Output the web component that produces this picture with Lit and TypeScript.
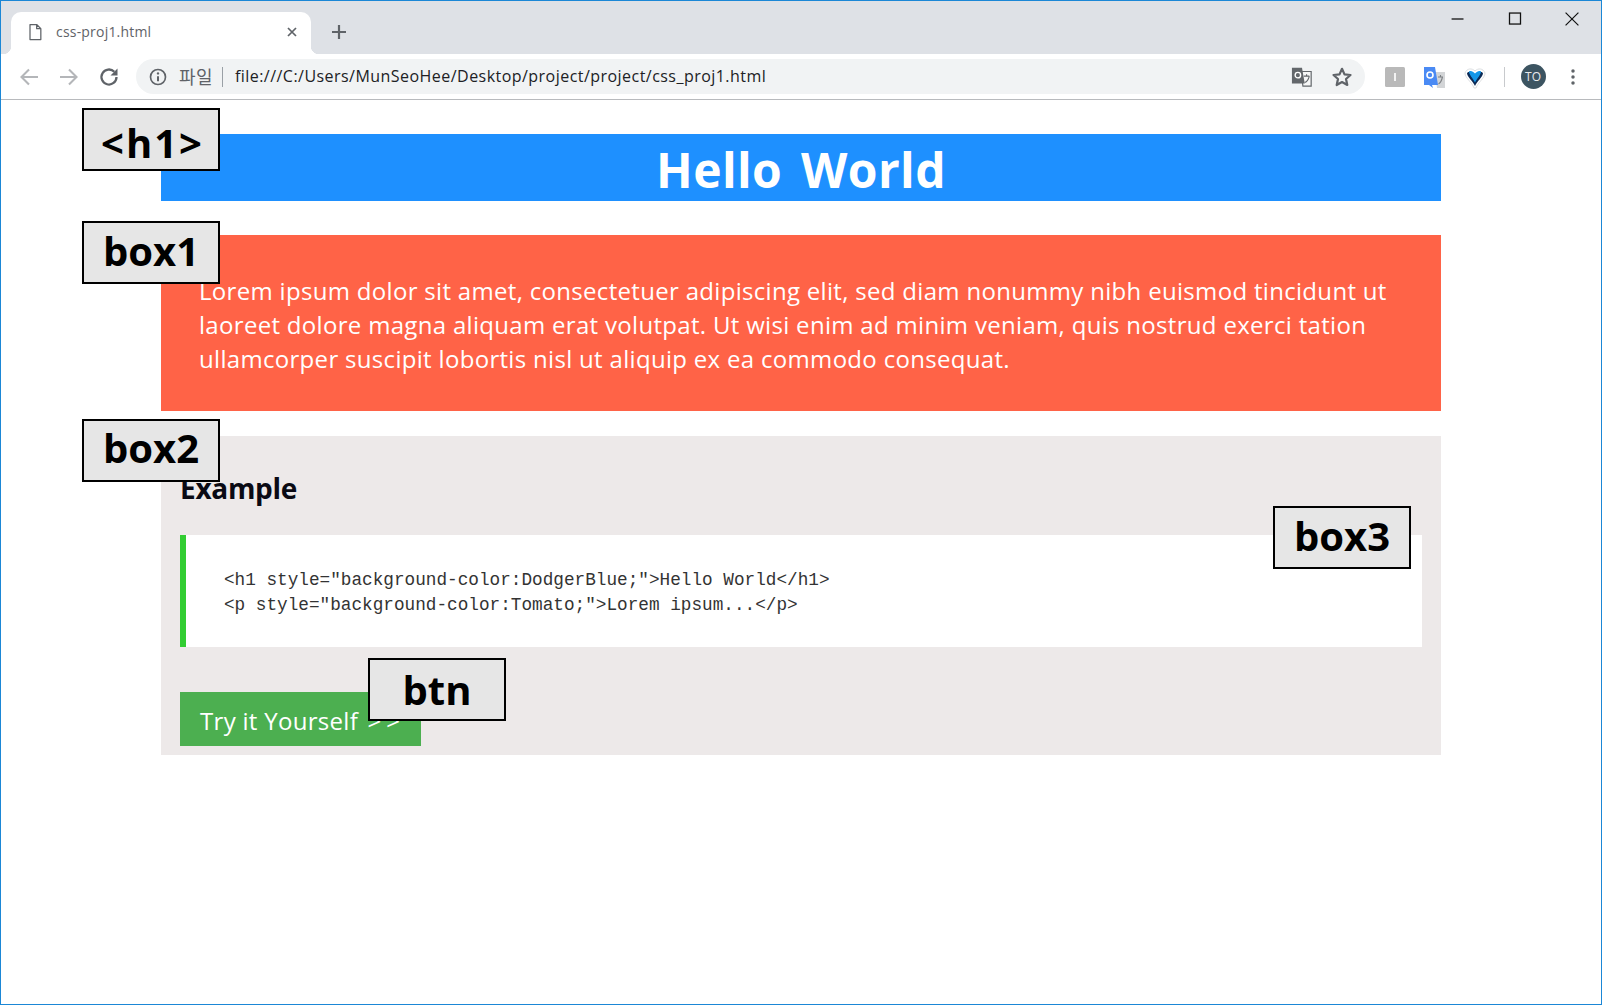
import { LitElement, html, css, svg } from "lit"
import { customElement } from "lit/decorators.js"

const icon = (size: number, body: unknown) =>
  html`<svg width=${size} height=${size} viewBox="0 0 24 24" fill="none">${body}</svg>`

@customElement("app-root")
export class AppRoot extends LitElement {
  static styles = css`
    :host {
      display: block;
      font-family: "Open Sans", "Noto Sans CJK KR", sans-serif;
      color: #000;
    }
    .window {
      box-sizing: border-box;
      height: 1005px;
      border: 1px solid #1b87d6;
      display: flex;
      flex-direction: column;
      background: #fff;
      overflow: hidden;
    }
    .tabstrip {
      height: 53px;
      flex: none;
      background: #dee1e6;
      display: flex;
      align-items: flex-end;
      padding-left: 10px;
    }
    .tab {
      box-sizing: border-box;
      width: 300px;
      height: 42px;
      background: #fff;
      border-radius: 10px 10px 0 0;
      display: flex;
      align-items: center;
      padding: 0 11px 3px 14px;
      font-size: 14px;
      color: #5f6368;
      position: relative;
    }
    .tab::before,
    .tab::after {
      content: "";
      position: absolute;
      bottom: 0;
      width: 8px;
      height: 8px;
    }
    .tab::before {
      left: -8px;
      background: radial-gradient(circle at 0 0, #dee1e6 8px, #fff 8.5px);
    }
    .tab::after {
      right: -8px;
      background: radial-gradient(circle at 100% 0, #dee1e6 8px, #fff 8.5px);
    }
    .tab-title {
      margin-left: 11px;
      flex: 1;
      letter-spacing: 0.2px;
    }
    .new-tab {
      margin: 0 0 10px 16px;
      height: 24px;
      display: flex;
    }
    .controls {
      margin-left: auto;
      align-self: flex-start;
      display: flex;
      padding: 7px 1px 0 0;
    }
    .controls div {
      width: 57px;
      height: 22px;
      display: flex;
      justify-content: center;
      align-items: center;
    }
    .toolbar {
      box-sizing: border-box;
      height: 46px;
      flex: none;
      display: flex;
      align-items: center;
      padding: 0 8px 0 8px;
      border-bottom: 1px solid #b8babd;
    }
    .tool {
      width: 40px;
      height: 36px;
      flex: none;
      display: flex;
      justify-content: center;
      align-items: center;
    }
    .omnibox {
      flex: 1;
      height: 35px;
      margin: 0 10px 0 7px;
      background: #f1f3f4;
      border-radius: 18px;
      display: flex;
      align-items: center;
      padding: 0 3px 0 12px;
      font-size: 16px;
      color: #202124;
    }
    .scheme {
      color: #5f6368;
      margin-left: 11px;
      padding-bottom: 2px;
      font-size: 18px;
      font-family: "Noto Sans CJK KR", sans-serif;
      letter-spacing: 0.4px;
    }
    .divider {
      width: 1px;
      height: 20px;
      background: #9aa0a6;
      margin: 0 12px 0 9px;
    }
    .url {
      flex: 1;
      padding-bottom: 2px;
      letter-spacing: 0.46px;
    }
    .omni-action {
      width: 40px;
      height: 30px;
      display: flex;
      justify-content: center;
      align-items: center;
    }
    .sep {
      width: 1px;
      height: 20px;
      background: #c8cacd;
      margin: 0 8px 0 9px;
      flex: none;
    }
    .avatar {
      width: 25px;
      height: 25px;
      border-radius: 50%;
      background: #3c5461;
      color: #e8eaed;
      font-size: 12px;
      display: flex;
      justify-content: center;
      align-items: center;
    }
    .page {
      flex: 1;
      position: relative;
      padding: 34px 160px 0;
    }
    h1 {
      margin: 0;
      height: 67px;
      line-height: 72px;
      background: #1e90ff;
      color: #fff;
      text-align: center;
      font-size: 48px;
      font-weight: 700;
      letter-spacing: 0.4px;
      word-spacing: 6px;
    }
    .box1 {
      box-sizing: border-box;
      margin: 34px 0 0;
      height: 176px;
      background: #ff6347;
      color: #fff;
      padding: 39px 38px 0;
      font-size: 24px;
      line-height: 34px;
      white-space: nowrap;
      letter-spacing: 0.31px;
    }
    .box2 {
      box-sizing: border-box;
      margin-top: 25px;
      height: 319px;
      background: #ede9e9;
      padding: 29px 19px 0;
    }
    h2 {
      margin: 0;
      font-size: 28px;
      line-height: 46px;
      height: 70px;
      font-weight: 700;
      color: #0a0a14;
      letter-spacing: -0.3px;
    }
    .box3 {
      box-sizing: border-box;
      height: 112px;
      background: #fff;
      border-left: 6px solid #32cd32;
      padding: 33px 0 0 38px;
      font-family: "Liberation Mono", monospace;
      font-size: 17.72px;
      line-height: 25px;
      color: #333;
      white-space: pre;
    }
    .btn {
      box-sizing: border-box;
      width: 241px;
      height: 54px;
      margin-top: 45px;
      background: #4caf50;
      color: #fff;
      font-size: 24px;
      line-height: 57px;
      padding-left: 20px;
      white-space: pre;
      letter-spacing: 0.3px;
    }
    .btn span {
      letter-spacing: 5px;
      margin-left: 3px;
    }
    .tag {
      position: absolute;
      box-sizing: border-box;
      width: 138px;
      height: 63px;
      background: #e6e6e6;
      border: 2px solid #000;
      display: flex;
      align-items: center;
      justify-content: center;
      font-size: 40px;
      font-weight: 700;
      line-height: 1;
      color: #000;
    }
    .tag span {
      position: relative;
    }
    .tag.wide {
      letter-spacing: 2px;
      padding-left: 3px;
    }
  `

  private tags = [
    { text: "<h1>", x: 81, y: 8, dy: 3, wide: true },
    { text: "box1", x: 81, y: 121, dy: -2, wide: false },
    { text: "box2", x: 81, y: 319, dy: -3, wide: false },
    { text: "box3", x: 1272, y: 406, dy: -2, wide: false },
    { text: "btn", x: 367, y: 558, dy: 0, wide: false },
  ]

  render() {
    return html`
      <div class="window">
        <div class="tabstrip">
          <div class="tab">
            ${icon(20, svg`<path d="M6 3h8l5 5v13H6z M14 3v5h5" stroke="#5f6368" stroke-width="1.5" stroke-linejoin="round"/>`)}
            <span class="tab-title">css-proj1.html</span>
            ${icon(16, svg`<path d="M6 6l12 12M18 6L6 18" stroke="#5f6368" stroke-width="2.6"/>`)}
          </div>
          <div class="new-tab">
            ${icon(24, svg`<path d="M12 5v14M5 12h14" stroke="#5f6368" stroke-width="2.2"/>`)}
          </div>
          <div class="controls">
            <div>${icon(22, svg`<path d="M5 12h13" stroke="#111" stroke-width="1.4"/>`)}</div>
            <div>${icon(22, svg`<rect x="6" y="5.5" width="12" height="12" stroke="#111" stroke-width="1.4"/>`)}</div>
            <div>${icon(22, svg`<path d="M5 5l14 14M19 5L5 19" stroke="#111" stroke-width="1.3"/>`)}</div>
          </div>
        </div>
        <div class="toolbar">
          <div class="tool">
            ${icon(24, svg`<path d="M21 12H5M12 4.5L4.5 12l7.5 7.5" stroke="#b4b6b9" stroke-width="2.1"/>`)}
          </div>
          <div class="tool">
            ${icon(24, svg`<path d="M3 12h16M12 4.5l7.5 7.5-7.5 7.5" stroke="#b4b6b9" stroke-width="2.1"/>`)}
          </div>
          <div class="tool">
            ${icon(24, svg`<path d="M19.500 12a7.500 7.500 0 1 1-2.200-5.300" stroke="#5f6368" stroke-width="2.300"/><path d="M20.500 3.500v7h-7z" fill="#5f6368"/>`)}
          </div>
          <div class="omnibox">
            ${icon(20, svg`<circle cx="12" cy="12" r="9" stroke="#5f6368" stroke-width="2"/><path d="M12 11v6" stroke="#5f6368" stroke-width="2.400"/><circle cx="12" cy="7.700" r="1.400" fill="#5f6368"/>`)}
            <span class="scheme">파일</span>
            <span class="divider"></span>
            <span class="url">file:///C:/Users/MunSeoHee/Desktop/project/project/css_proj1.html</span>
            <div class="omni-action">
              ${icon(22, svg`<path d="M11 6h11v16H13z" fill="#f6f7f7" stroke="#63676b" stroke-width="1.300"/><path d="M1 2h11l3 17H1z" fill="#63676b"/><circle cx="7.500" cy="10" r="3" stroke="#fff" stroke-width="1.500"/><path d="M14 11h6M17 9v2M15 18c3-1 4-3 5-7" stroke="#63676b" stroke-width="1.200"/>`)}
            </div>
            <div class="omni-action">
              ${icon(24, svg`<path d="M12 3.800l2.500 5.600 6 .6-4.500 4 1.300 6L12 17l-5.300 3 1.300-6-4.500-4 6-.6z" stroke="#5f6368" stroke-width="2.200" stroke-linejoin="round"/>`)}
            </div>
          </div>
          <div class="tool">
            ${icon(24, svg`<rect x="2" y="2" width="20" height="20" rx="1.500" fill="#b9b9b9"/><path d="M12 8v8" stroke="#f2f2f2" stroke-width="2"/>`)}
          </div>
          <div class="tool">
            ${icon(24, svg`<path d="M12 7h10v16h-8z" fill="#d3d5d7"/><path d="M15 12h5M17.500 10v2M15.500 19c2-1 3-3 4-7" stroke="#7d8084" stroke-width="1.100"/><path d="M1 2h11l3 18H9l1 3-4-3H1z" fill="#4a8af4"/><circle cx="7" cy="10" r="3" stroke="#fff" stroke-width="1.600"/>`)}
          </div>
          <div class="tool">
            ${icon(24, svg`<path d="M2 8c2-5 7-5 10-2 3-3 8-3 10 2 0 5-7 9-9 15h-2C9 17 2 13 2 8z" fill="#fff" stroke="#dcdfe1" stroke-width="1"/><path d="M4 8c2-2 5-2 8 2 3-4 6-4 8-2 0 4-6 8-8 13C10 16 4 12 4 8z" fill="#0c2a55"/><path d="M6 6.500c2-1 4 0 6 2 2-2 4-3 6-2 0 3-4 7-6 11-2-4-6-8-6-11z" fill="#1296e8"/>`)}
          </div>
          <span class="sep"></span>
          <div class="tool"><div class="avatar">TO</div></div>
          <div class="tool">
            ${icon(22, svg`<circle cx="12" cy="5.500" r="1.900" fill="#5f6368"/><circle cx="12" cy="12" r="1.900" fill="#5f6368"/><circle cx="12" cy="18.500" r="1.900" fill="#5f6368"/>`)}
          </div>
        </div>
        <div class="page">
          <h1>Hello World</h1>
          <p class="box1">Lorem ipsum dolor sit amet, consectetuer adipiscing elit, sed diam nonummy nibh euismod tincidunt ut<br />laoreet dolore magna aliquam erat volutpat. Ut wisi enim ad minim veniam, quis nostrud exerci tation<br />ullamcorper suscipit lobortis nisl ut aliquip ex ea commodo consequat.</p>
          <div class="box2">
            <h2>Example</h2>
            <div class="box3">&lt;h1 style="background-color:DodgerBlue;"&gt;Hello World&lt;/h1&gt;
&lt;p style="background-color:Tomato;"&gt;Lorem ipsum...&lt;/p&gt;</div>
            <div class="btn">Try it Yourself <span>&gt;&gt;</span></div>
          </div>
          ${this.tags.map(
            (t) => html`<div class="tag ${t.wide ? "wide" : ""}" style="left:${t.x}px;top:${t.y}px"><span style="top:${t.dy}px">${t.text}</span></div>`
          )}
        </div>
      </div>
    `
  }
}
